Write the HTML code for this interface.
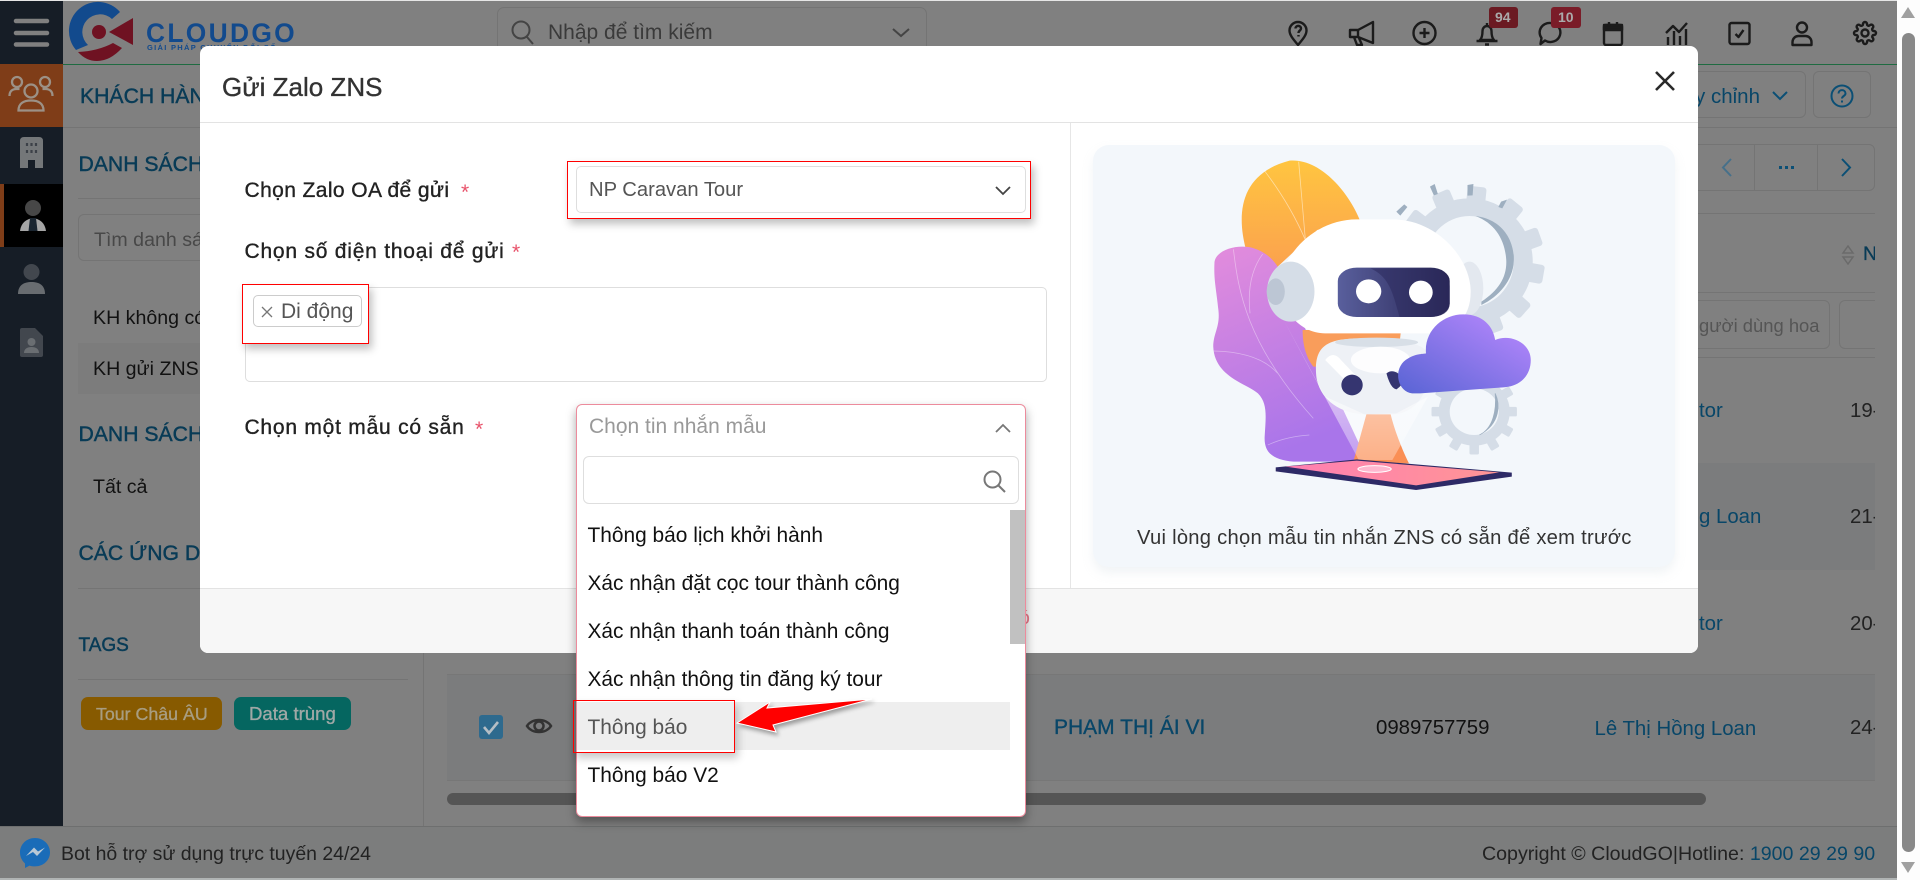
<!DOCTYPE html>
<html lang="vi"><head><meta charset="utf-8"><title>Gửi Zalo ZNS</title>
<style>
html,body{margin:0;padding:0;width:1920px;height:880px;overflow:hidden;background:#808080;font-family:"Liberation Sans","Noto Sans CJK SC",sans-serif;color:#222}
.a{position:absolute}
.t{position:absolute;line-height:0;white-space:nowrap;font-size:19.6px}
.m{-webkit-text-stroke:.35px currentColor}
.h{color:#083b56;font-size:21.2px;-webkit-text-stroke:.45px currentColor}
.l{color:#084668}
.b{box-sizing:border-box;border:1px solid #747474;border-radius:6px}
.d{background:#747474;height:1px}
.s{color:#e8536b;font-size:21px}
.o{color:#111;font-size:20.9px;left:587.500px}
svg{position:absolute;overflow:visible}
</style></head><body>

<!-- background app -->
<div class="a" style="left:0;top:0;width:1920px;height:1px;background:#e6e6e6"></div>
<div class="a" style="left:0;top:1px;width:63px;height:826px;background:#161d26"></div>
<div class="a" style="left:0;top:64px;width:63px;height:63px;background:#7f3d18"></div>
<div class="a" style="left:0;top:184px;width:63px;height:63px;background:#000"></div>
<div class="a" style="left:0;top:184px;width:4px;height:63px;background:#7f3d18"></div>

<svg style="left:0;top:0" width="63" height="400" fill="none">
<g stroke="#808080" stroke-width="4.500" stroke-linecap="round"><path d="M16 21h31M16 33h31M16 44.500h31"/></g>
<g stroke="#9c9186" stroke-width="2.300"><circle cx="17" cy="82" r="5"/><circle cx="45" cy="82" r="5"/><circle cx="31" cy="91" r="6.500"/><path d="M9.500 96c0-5 3-7 7-7h3M52.500 96c0-5-3-7-7-7h-3M18.500 110.500c0-7 5-10 12.500-10s12.500 3 12.500 10z"/></g>
<path d="M20 141q0-4 4-4h15q4 0 4 4v27H35v-8h-7v8h-8z" fill="#747779"/>
<path d="M27 143v3M31.500 143v3M36 143v3M27 150v3M31.500 150v3M36 150v3" stroke="#3c4148" stroke-width="2.200"/>
<circle cx="33" cy="208" r="8" fill="#474747"/><path d="M20 231c1-8 6-12 13-13 7 1 12 5 13 13z" fill="#a5a5a5"/><path d="M30 218h6l1.500 13h-9z" fill="#1a2530"/>
<circle cx="31.500" cy="272" r="8" fill="#42474e"/><path d="M18 294c0-9 6-12 13.500-12S45 285 45 294z" fill="#686c70"/>
<path d="M20 330q0-2 2-2h13l8 8v19q0 2-2 2H22q-2 0-2-2z" fill="#42474e"/><circle cx="31.500" cy="342" r="4" fill="#6a6e72"/><path d="M24 353c0-4 3-6 7.500-6s7.500 2 7.500 6z" fill="#6a6e72"/>
</svg>

<!-- logo -->
<svg style="left:0;top:0" width="300" height="64">
<path d="M120 12A29 29 0 0 0 76 50L88 45A17 17 0 0 1 112 19z" fill="#124a8d"/>
<path d="M78 52Q98 51 113 43L122 48Q110 61 97 61 86 61 78 52z" fill="#6f1222"/>
<circle cx="99" cy="32" r="7" fill="#6f1222"/>
<path d="M133 18V45L109 32z" fill="#6f1222"/>
</svg>
<div class="t" style="left:146px;top:33px;font-size:26.400px;font-weight:bold;letter-spacing:2.300px;color:#124a8d">CLOUDGO</div>
<div class="t" style="left:147px;top:48px;font-size:7.500px;font-weight:bold;letter-spacing:1.300px;color:#124a8d">GIẢI PHÁP CHUYỂN ĐỔI SỐ</div>

<div class="a" style="left:497px;top:7px;width:430px;height:50px;box-sizing:border-box;border:1px solid #747474;border-radius:7px"></div>
<svg style="left:511px;top:20px" width="26" height="26" fill="none" stroke="#444" stroke-width="2"><circle cx="10" cy="10" r="8.500"/><path d="M16 17l6 7"/></svg>
<div class="t" style="left:548px;top:33px;color:#3a3a3a;font-size:21px">Nhập để tìm kiếm</div>
<svg style="left:892px;top:28px" width="18" height="10" fill="none" stroke="#444" stroke-width="2"><path d="M1 1l8 7 8-7"/></svg>

<!-- header icons -->
<svg style="left:0;top:0" width="1920" height="64" fill="none" stroke="#1b1b1b" stroke-width="2.400" stroke-linejoin="round">
<g transform="translate(1286 21)"><path d="M12 24C7 18 3.500 14 3.500 9.500a8.500 8.500 0 0 1 17 0C20.500 14 17 18 12 24z"/><path d="M9.500 7.500c0-3.500 5.500-3.500 5.500 0 0 2-2.500 2-2.500 4.500M12.500 14v1.500"/></g>
<g transform="translate(1350 21)"><path d="M0 9h8L23 1v21L8 16H0z"/><path d="M4 16l3 8h5l-3-7M8 9v7"/></g>
<g transform="translate(1412.500 21)"><circle cx="12" cy="12" r="11"/><path d="M12 7v10M7 12h10"/></g>
<g transform="translate(1475 21)"><path d="M5 19c1-1 2.500-3 2.500-9a4.500 5 0 0 1 9 0c0 6 1.500 8 2.500 9zM1.500 20h21M10 23.500h4M12 2v3"/></g>
<g transform="translate(1538 21)"><path d="M12.500 2a10 9.500 0 1 1-5.500 17.500L2.500 23l1-6A10 9.500 0 0 1 12.500 2z"/></g>
<g transform="translate(1601 21)"><rect x="3" y="4" width="18" height="20" rx="2"/><rect x="3" y="4" width="18" height="5" fill="#1b1b1b"/><path d="M8 1v4M16 1v4"/></g>
<g transform="translate(1665 21)"><path d="M3 24v-8M9 24V10M15 24v-9M21 24V8M1 12l7-7 6 6 8-9"/></g>
<g transform="translate(1727.500 21)"><rect x="2" y="2" width="20" height="21" rx="2"/><path d="M8 13l3 3 5-7"/></g>
<g transform="translate(1790 21)"><circle cx="12" cy="6.500" r="5"/><path d="M2.500 24v-3a6 6 0 0 1 6-6h7a6 6 0 0 1 6 6v3z"/></g>
<g transform="translate(1853 21)"><circle cx="12" cy="12" r="3.500"/><path d="M19.400 15a1.650 1.650 0 0 0 .33 1.820l.06.06a2 2 0 0 1 0 2.830 2 2 0 0 1-2.830 0l-.06-.06a1.650 1.650 0 0 0-1.820-.33 1.650 1.650 0 0 0-1 1.510V21a2 2 0 0 1-2 2 2 2 0 0 1-2-2v-.09A1.650 1.650 0 0 0 9 19.400a1.650 1.650 0 0 0-1.820.33l-.06.06a2 2 0 0 1-2.830 0 2 2 0 0 1 0-2.830l.06-.06a1.650 1.650 0 0 0 .33-1.820 1.650 1.650 0 0 0-1.510-1H3a2 2 0 0 1-2-2 2 2 0 0 1 2-2h.09A1.650 1.650 0 0 0 4.600 9a1.650 1.650 0 0 0-.33-1.820l-.06-.06a2 2 0 0 1 0-2.830 2 2 0 0 1 2.830 0l.06.06a1.650 1.650 0 0 0 1.820.33H9a1.650 1.650 0 0 0 1-1.510V3a2 2 0 0 1 2-2 2 2 0 0 1 2 2v.09a1.650 1.650 0 0 0 1 1.510 1.650 1.650 0 0 0 1.820-.33l.06-.06a2 2 0 0 1 2.830 0 2 2 0 0 1 0 2.830l-.06.06a1.650 1.650 0 0 0-.33 1.820V9a1.650 1.650 0 0 0 1.510 1H21a2 2 0 0 1 2 2 2 2 0 0 1-2 2h-.09a1.650 1.650 0 0 0-1.510 1z"/></g>
</svg>
<div class="a" style="left:1489px;top:7px;width:29px;height:21px;background:#6b1a22;border-radius:3px"></div>
<div class="t" style="left:1495px;top:17px;font-size:14px;font-weight:bold;color:#aaa">94</div>
<div class="a" style="left:1551px;top:7px;width:30px;height:21px;background:#7a1c28;border-radius:3px"></div>
<div class="t" style="left:1558px;top:17px;font-size:14px;font-weight:bold;color:#aaa">10</div>

<div class="a" style="left:63px;top:64px;width:1834px;height:1px;background:#1f6b41"></div>
<div class="a d" style="left:63px;top:127px;width:1834px"></div>
<div class="a" style="left:423px;top:127px;width:1px;height:700px;background:#747474"></div>

<div class="t h" style="left:80px;top:97px">KHÁCH HÀNG</div>
<div class="t h" style="left:78.500px;top:165px">DANH SÁCH</div>
<div class="a d" style="left:78px;top:198px;width:330px"></div>
<div class="a b" style="left:78px;top:214px;width:300px;height:47px"></div>
<div class="t" style="left:94px;top:240px;color:#484848">Tìm danh sách</div>
<div class="t" style="left:93px;top:318px;color:#111">KH không có</div>
<div class="a" style="left:78px;top:343px;width:330px;height:51px;background:#7c7c7c"></div>
<div class="t" style="left:93px;top:369px;color:#111">KH gửi ZNS</div>
<div class="t h" style="left:78.500px;top:435px">DANH SÁCH</div>
<div class="t" style="left:93px;top:487px;color:#111">Tất cả</div>
<div class="t h" style="left:78.500px;top:554px">CÁC ỨNG DỤNG</div>
<div class="a d" style="left:78px;top:588px;width:330px"></div>
<div class="t h" style="left:78.500px;top:646px;font-size:19px">TAGS</div>
<div class="a d" style="left:78px;top:679px;width:330px"></div>
<div class="a" style="left:81px;top:697px;width:141px;height:33px;background:#875a00;border-radius:7px"></div>
<div class="t m" style="left:96px;top:714px;font-size:17.800px;color:#a89d80">Tour Châu ÂU</div>
<div class="a" style="left:234px;top:697px;width:117px;height:33px;background:#056660;border-radius:7px"></div>
<div class="t m" style="left:249px;top:714px;font-size:18.600px;color:#a0a8a6">Data trùng</div>

<!-- top-right controls -->
<div class="a b" style="left:1600px;top:71px;width:206px;height:47px"></div>
<div class="t l" style="right:160px;top:97px;font-size:20.500px">Tùy chỉnh</div>
<svg style="left:1772px;top:91px" width="16" height="10" fill="none" stroke="#0b4f75" stroke-width="2"><path d="M1 1l7 7 7-7"/></svg>
<div class="a b" style="left:1813px;top:71px;width:58px;height:47px"></div>
<svg style="left:1830px;top:84px" width="24" height="24" fill="none" stroke="#0b4f75" stroke-width="2"><circle cx="12" cy="12" r="10.500"/><path d="M8.500 9.500c0-4.500 7-4.500 7 0 0 2.500-3.500 2.500-3.500 5M12 16.500v2"/></svg>
<div class="a b" style="left:1600px;top:144px;width:275px;height:47px"></div>
<div class="a" style="left:1754px;top:144px;width:1px;height:47px;background:#747474"></div>
<div class="a" style="left:1817px;top:144px;width:1px;height:47px;background:#747474"></div>
<svg style="left:1720px;top:158px" width="160" height="20" fill="none" stroke-width="2"><path d="M11 1L3 9.500l8 8.500" stroke="#46708a"/><path d="M122 1l8 8.500-8 8.500" stroke="#0b4f75"/><path d="M59 9.500h3M65 9.500h3M71 9.500h3" stroke="#0b4f75" stroke-width="3"/></svg>

<div class="a d" style="left:447px;top:213px;width:1428px"></div>
<div class="a d" style="left:447px;top:292px;width:1428px"></div>
<svg style="left:1842px;top:244px" width="12" height="22" fill="none" stroke="#6a6a6a" stroke-width="1.500"><path d="M1 9l5-7 5 7zM1 13l5 7 5-7z"/></svg>
<div class="t m" style="left:1863px;top:254px;width:12px;overflow:hidden;line-height:24px;height:24px;margin-top:-12px;color:#083b56;font-size:19.600px">N</div>
<div class="a b" style="left:1600px;top:300px;width:230px;height:49px"></div>
<div class="t" style="left:1699px;top:326px;color:#555;font-size:18.400px">gười dùng hoa</div>
<div class="a" style="left:1839px;top:300px;width:36px;height:49px;box-sizing:border-box;border:1px solid #747474;border-right:0;border-radius:6px 0 0 6px"></div>
<div class="a d" style="left:447px;top:357px;width:1428px"></div>
<div class="a" style="left:447px;top:463px;width:1428px;height:107px;background:#7b7c7d"></div>
<div class="a" style="left:447px;top:674px;width:1428px;height:107px;background:#7b7c7d;border-top:1px solid #777;border-bottom:1px solid #777;box-sizing:border-box"></div>
<div class="t l" style="left:1699px;top:411px;font-size:20.400px">tor</div>
<div class="t" style="left:1850px;top:411px;width:25px;overflow:hidden;height:24px;line-height:24px;margin-top:-12px;font-size:20.400px">19-</div>
<div class="t l" style="left:1699px;top:517px;font-size:20.400px">g Loan</div>
<div class="t" style="left:1850px;top:517px;width:25px;overflow:hidden;height:24px;line-height:24px;margin-top:-12px;font-size:20.400px">21-</div>
<div class="t l" style="left:1699px;top:624px;font-size:20.400px">tor</div>
<div class="t" style="left:1850px;top:624px;width:25px;overflow:hidden;height:24px;line-height:24px;margin-top:-12px;font-size:20.400px">20-</div>
<div class="a" style="left:479px;top:715px;width:24px;height:24px;background:#2e6a8e;border-radius:3px"></div>
<svg style="left:479px;top:715px" width="24" height="24" fill="none" stroke="#b5bec5" stroke-width="2.600"><path d="M5 12l5 6 9-11"/></svg>
<svg style="left:526px;top:715px" width="26" height="22" fill="none" stroke="#333" stroke-width="2.500"><path d="M1 11C6 3 20 3 25 11 20 19 6 19 1 11z"/><circle cx="13" cy="11" r="4.500"/></svg>
<div class="t l m" style="left:1054px;top:728px;font-size:21px">PHẠM THỊ ÁI VI</div>
<div class="t" style="left:1376px;top:728px;color:#111;font-size:20.400px">0989757759</div>
<div class="t l" style="left:1594.500px;top:729px;font-size:20.400px">Lê Thị Hồng Loan</div>
<div class="t" style="left:1850px;top:728px;width:25px;overflow:hidden;height:24px;line-height:24px;margin-top:-12px;font-size:20.400px">24-</div>
<div class="a" style="left:447px;top:793px;width:1259px;height:12px;background:#555;border-radius:6px"></div>

<!-- footer -->
<div class="a" style="left:0;top:826px;width:1897px;height:52px;background:#7c7d7d;border-top:1px solid #6e6f6f;box-sizing:border-box"></div>
<svg style="left:20px;top:838px" width="30" height="30"><path d="M15 0C6.500 0 0 6.300 0 14.500c0 4.500 2 8.300 5 11V30l4.500-2.400c1.700.5 3.500.8 5.500.8 8.500 0 15-6.200 15-14S23.500 0 15 0z" fill="#1a6cb8"/><path d="M6 18l8-8.500 4 4 7-4-8 8.500-4-4z" fill="#b9c9d6"/></svg>
<div class="t" style="left:61px;top:854px;color:#222;font-size:19.450px">Bot hỗ trợ sử dụng trực tuyến 24/24</div>
<div class="t" style="left:1482px;top:854px;color:#222;font-size:19.600px">Copyright © CloudGO|Hotline: <span class="l">1900 29 29 90</span></div>
<div class="a" style="left:0;top:878px;width:1897px;height:2px;background:#b0b4b4"></div>

<!-- page scrollbar -->
<div class="a" style="left:1897px;top:0;width:23px;height:880px;background:#fdfdfd"></div>
<div class="a" style="left:1902px;top:33px;width:13px;height:819px;background:#888;border-radius:7px"></div>
<svg style="left:1900px;top:6px" width="16" height="14"><path d="M8 1l7 11H1z" fill="#a0a0a0"/></svg>
<svg style="left:1900px;top:860px" width="16" height="14"><path d="M8 13l7-11H1z" fill="#a0a0a0"/></svg>

<!-- modal -->
<div class="a" style="left:200px;top:46px;width:1498px;height:607px;background:#fff;border-radius:8px;overflow:hidden">
  <div class="a" style="left:0;top:76px;width:1498px;height:1px;background:#e3e3e3"></div>
  <div class="a" style="left:0;top:542px;width:1498px;height:65px;background:#f7f7f7;border-top:1px solid #e3e3e3;box-sizing:border-box"></div>
  <div class="a" style="left:870px;top:77px;width:1px;height:465px;background:#e6e6e6"></div>
</div>
<div class="t m" style="left:222px;top:87px;font-size:26px;color:#333">Gửi Zalo ZNS</div>
<svg style="left:1655px;top:71px" width="20" height="20" fill="none" stroke="#2a2a2a" stroke-width="2.600"><path d="M1 1l18 18M19 1L1 19"/></svg>

<!-- labels -->
<div class="t m" style="left:244.500px;top:191px;font-size:21px;letter-spacing:.4px;color:#222">Chọn Zalo OA để gửi</div>
<div class="t s" style="left:461px;top:193px">*</div>
<div class="t m" style="left:244.500px;top:251.500px;font-size:21px;letter-spacing:.78px;color:#222">Chọn số điện thoại để gửi</div>
<div class="t s" style="left:512px;top:253px">*</div>
<div class="t m" style="left:244.500px;top:428px;font-size:21px;letter-spacing:.77px;color:#222">Chọn một mẫu có sẵn</div>
<div class="t s" style="left:475px;top:430px">*</div>

<!-- select 1 -->
<div class="a" style="left:567px;top:161px;width:464px;height:58px;box-sizing:border-box;border:1.500px solid #f00;box-shadow:3px 5px 8px rgba(0,0,0,.25)"></div>
<div class="a" style="left:576px;top:166px;width:450px;height:47px;box-sizing:border-box;background:#fff;border:1px solid #dedede;border-radius:5px"></div>
<div class="t" style="left:589px;top:190px;color:#555;font-size:20.200px">NP Caravan Tour</div>
<svg style="left:995px;top:186px" width="16" height="10" fill="none" stroke="#444" stroke-width="1.800"><path d="M1 1l7 7 7-7"/></svg>

<!-- multi select -->
<div class="a" style="left:245px;top:287px;width:802px;height:95px;box-sizing:border-box;border:1px solid #dedede;border-radius:5px;background:#fff"></div>
<div class="a" style="left:242px;top:284px;width:127px;height:60px;box-sizing:border-box;border:1.500px solid #f00;box-shadow:3px 5px 8px rgba(0,0,0,.25);background:#fff"></div>
<div class="a" style="left:253px;top:295px;width:109px;height:32px;box-sizing:border-box;border:1px solid #ccc;border-radius:5px"></div>
<svg style="left:261px;top:306px" width="12" height="12" fill="none" stroke="#777" stroke-width="1.300"><path d="M1 1l10 10M11 1L1 11"/></svg>
<div class="t" style="left:281px;top:312px;color:#555;font-size:21px">Di động</div>

<!-- illustration panel -->
<div class="a" style="left:1093px;top:145px;width:582px;height:422px;background:#f3f7fb;border-radius:16px;box-shadow:0 6px 10px rgba(200,210,220,.25)"></div>
<div class="t" style="left:1137px;top:538px;font-size:20.200px;letter-spacing:.26px;color:#333">Vui lòng chọn mẫu tin nhắn ZNS có sẵn để xem trước</div>
<svg style="left:1080px;top:130px" width="620" height="470" viewBox="0 0 1568 1410" preserveAspectRatio="none">
<defs>
<linearGradient id="g1" x1="0" y1="0" x2="0" y2="1"><stop offset="0" stop-color="#ffc540"/><stop offset="1" stop-color="#fba24e"/></linearGradient>
<linearGradient id="g2" x1="0" y1="0" x2=".3" y2="1"><stop offset="0" stop-color="#e38cdc"/><stop offset="1" stop-color="#a975ea"/></linearGradient>
<linearGradient id="g3" x1="0" y1="0" x2="1" y2="0"><stop offset="0" stop-color="#595f9d"/><stop offset="1" stop-color="#282653"/></linearGradient>
<linearGradient id="g4" x1="0" y1="1" x2="1" y2="0"><stop offset="0" stop-color="#5864d4"/><stop offset=".8" stop-color="#a982f7"/></linearGradient>
<linearGradient id="g5" x1="0" y1="0" x2="1" y2="0"><stop offset="0" stop-color="#ff7fb2"/><stop offset="1" stop-color="#ff9595"/></linearGradient>
<linearGradient id="g6" x1="0" y1="0" x2="0" y2="1"><stop offset="0" stop-color="#fff" stop-opacity=".75"/><stop offset="1" stop-color="#fff" stop-opacity=".3"/></linearGradient>
</defs>
<path d="M420 360C395 250 405 130 530 92 610 85 680 190 707 268L600 300 500 410z" fill="url(#g1)"/>
<path d="M465 120Q530 220 570 330M553 95L570 330" fill="none" stroke="#fff" stroke-opacity=".5" stroke-width="2"/>
<!-- large gear -->
<g fill="#d5dde7">
<g transform="translate(985 395) scale(1 1.190)"><rect x="-24" y="-190" width="48" height="50" rx="8" transform="rotate(-53)"/><rect x="-24" y="-190" width="48" height="50" rx="8" transform="rotate(-23)"/><rect x="-24" y="-190" width="48" height="50" rx="8" transform="rotate(6)"/><rect x="-24" y="-190" width="48" height="50" rx="8" transform="rotate(39)"/><rect x="-24" y="-190" width="48" height="50" rx="8" transform="rotate(70)"/><rect x="-24" y="-190" width="48" height="50" rx="8" transform="rotate(100)"/><rect x="-24" y="-190" width="48" height="50" rx="8" transform="rotate(132)"/><rect x="-24" y="-190" width="48" height="50" rx="8" transform="rotate(160)"/></g>
<path fill-rule="evenodd" d="M825 395a160 190 0 1 0 320 0a160 190 0 1 0-320 0zM873 395a112 137 0 1 0 224 0a112 137 0 1 0-224 0z"/>
</g>
<path d="M1000 258C1080 270 1100 350 1097 395 1095 450 1060 500 1015 525L1015 515C1060 480 1080 440 1078 390 1075 330 1050 280 1000 258z" fill="#9eafc0"/>
<path d="M885 170l12-8 8 30-10 4zM980 165l15-3-2 34-13 1zM1065 215l15-6-12 26-10-4zM800 245l20-22 8 8-18 26z" fill="#9eafc0"/>
<!-- small gear -->
<g fill="#d5dde7">
<g transform="translate(997 845) scale(1 1.190)"><rect x="-12" y="-108" width="24" height="30" rx="4" transform="rotate(60)"/><rect x="-12" y="-108" width="24" height="30" rx="4" transform="rotate(90)"/><rect x="-12" y="-108" width="24" height="30" rx="4" transform="rotate(120)"/><rect x="-12" y="-108" width="24" height="30" rx="4" transform="rotate(150)"/><rect x="-12" y="-108" width="24" height="30" rx="4" transform="rotate(180)"/><rect x="-12" y="-108" width="24" height="30" rx="4" transform="rotate(210)"/><rect x="-12" y="-108" width="24" height="30" rx="4" transform="rotate(240)"/><rect x="-12" y="-108" width="24" height="30" rx="4" transform="rotate(270)"/><rect x="-12" y="-108" width="24" height="30" rx="4" transform="rotate(300)"/></g>
<path fill-rule="evenodd" d="M907 845a90 102 0 1 0 180 0a90 102 0 1 0-180 0zM935 845a62 70 0 1 0 124 0a62 70 0 1 0-124 0z"/>
</g>
<path d="M1050 790C1062 820 1065 880 1010 915 1045 895 1054 840 1050 790z" fill="#9eafc0" stroke="#9eafc0" stroke-width="2"/>
<path d="M340 400C340 360 400 340 440 355 480 370 510 410 520 470L727 995 540 995C490 990 465 970 467 920 470 860 475 820 450 790 420 760 340 740 337 650 337 610 355 590 350 540 345 480 338 450 340 400z" fill="url(#g2)"/>
<path d="M388 358C400 480 420 640 590 865M338 663C420 665 470 690 500 730M475 945Q520 920 580 915M462 372Q420 440 430 550" fill="none" stroke="#fff" stroke-opacity=".4" stroke-width="2"/>
<path d="M563 600H812L800 720 590 710C570 680 563 640 563 600z" fill="#f99d5b"/>
<path d="M725 850H785C795 900 815 960 832 1000H690z" fill="#fa8f55"/>
<ellipse cx="985" cy="475" rx="35" ry="80" fill="#e3e8ef"/>
<path d="M700 268H790C900 268 985 380 988 480 990 560 950 610 880 610H620C550 610 510 530 505 480 505 380 590 268 700 268z" fill="#fff"/>
<ellipse cx="533" cy="485" rx="60" ry="90" fill="#d5dde7"/>
<ellipse cx="495" cy="485" rx="23" ry="40" fill="#bcc6d4"/>
<rect x="652" y="413" width="283" height="148" rx="48" ry="40" fill="url(#g3)"/>
<path d="M735 415H880Q935 415 935 470V520Q935 561 880 561H808C790 480 780 440 735 415z" fill="#2c2a5c" opacity=".55"/>
<ellipse cx="730" cy="484" rx="32" ry="36" fill="#fff"/>
<ellipse cx="862" cy="487" rx="30" ry="35" fill="#fff"/>
<path d="M640 635C600 650 595 690 597 730 600 800 650 850 720 853H790C840 853 880 800 880 730V670C870 640 800 625 740 625 700 625 660 625 640 635z" fill="#eef1f6"/>
<ellipse cx="750" cy="637" rx="105" ry="14" fill="#d8dfe7"/>
<path d="M620 690Q640 660 660 690L700 740 670 750z" fill="#fff"/>
<ellipse cx="760" cy="690" rx="75" ry="40" fill="#fff" opacity=".85"/>
<ellipse cx="688" cy="765" rx="27" ry="31" fill="#353570"/>
<path d="M515 570L705 990H790L880 800 800 850 720 853 620 800z" fill="url(#g6)"/>
<path d="M775 730Q790 715 810 735 825 760 800 778 785 775 775 730z" fill="#353570"/>
<path d="M840 790C800 785 790 710 830 685 850 670 870 672 875 670 870 600 920 552 970 553 1020 553 1045 590 1050 630 1090 610 1140 640 1140 690 1140 740 1110 770 1070 772L860 790z" fill="url(#g4)"/>
<path d="M495 1012L700 988 1092 1028 1092 1040 850 1080 495 1024z" fill="#2d2a66"/>
<path d="M520 1010L700 992 1060 1027 850 1066z" fill="url(#g5)"/>
<ellipse cx="745" cy="1017" rx="42" ry="10" fill="#ffb8cf" stroke="#fff" stroke-width="3"/>
</svg>

<!-- footer partial text -->
<div class="t" style="left:1019px;top:618px;color:#e8788a">ó</div>

<!-- dropdown -->
<div class="a" style="left:576px;top:404px;width:450px;height:413px;box-sizing:border-box;background:#fff;border:1px solid #ec8b9c;border-radius:6px;box-shadow:0 5px 10px rgba(0,0,0,.35)"></div>
<div class="t" style="left:589px;top:427px;color:#999;font-size:21px">Chọn tin nhắn mẫu</div>
<svg style="left:995px;top:423px" width="16" height="10" fill="none" stroke="#777" stroke-width="1.800"><path d="M1 9l7-7 7 7"/></svg>
<div class="a" style="left:583px;top:456px;width:436px;height:48px;box-sizing:border-box;border:1px solid #dedede;border-radius:6px;background:#fff"></div>
<svg style="left:983px;top:470px" width="24" height="24" fill="none" stroke="#777" stroke-width="2"><circle cx="9.500" cy="9.500" r="8"/><path d="M15 15l7 7"/></svg>
<div class="a" style="left:1010px;top:510px;width:15px;height:134px;background:#c1c1c1"></div>
<div class="a" style="left:577px;top:702px;width:433px;height:48px;background:#eee"></div>
<div class="t o" style="top:536px">Thông báo lịch khởi hành</div>
<div class="t o" style="top:584px">Xác nhận đặt cọc tour thành công</div>
<div class="t o" style="top:632px">Xác nhận thanh toán thành công</div>
<div class="t o" style="top:680px">Xác nhận thông tin đăng ký tour</div>
<div class="t o" style="top:728px;color:#555">Thông báo</div>
<div class="t o" style="top:776px">Thông báo V2</div>

<!-- annotation -->
<div class="a" style="left:573px;top:700px;width:162px;height:53px;box-sizing:border-box;border:1.500px solid #f00;box-shadow:3px 5px 8px rgba(0,0,0,.22)"></div>
<svg style="left:0;top:0;filter:drop-shadow(2px 3px 2px rgba(0,0,0,.35))" width="1920" height="880"><path d="M737 723L770 702 767 708 872 699 773 725 776 732z" fill="#f00" stroke="#fff" stroke-width="1"/></svg>
</body></html>
